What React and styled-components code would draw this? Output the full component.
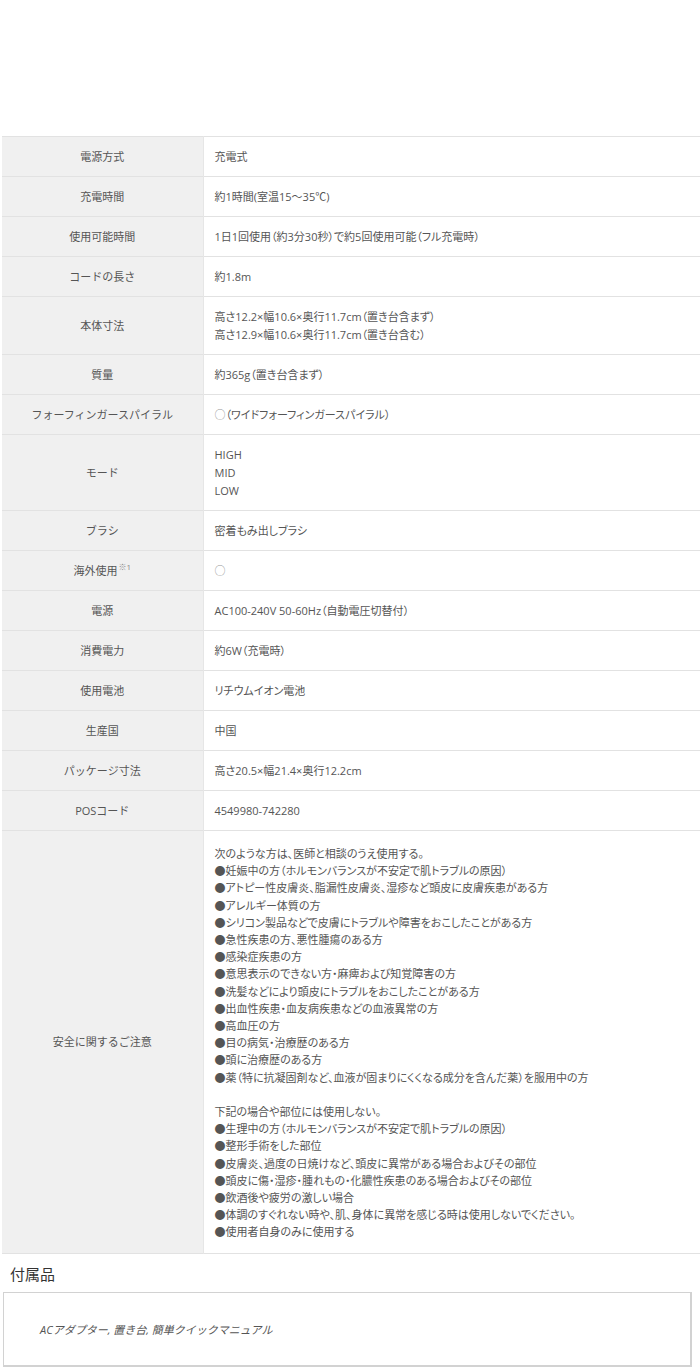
import React from 'react';
import styled, { createGlobalStyle } from 'styled-components';

const Global = createGlobalStyle`
    body {
        margin: 0;
        background: #fff;
        font-family: "Open Sans", "Noto Sans CJK JP", sans-serif;
        color: #555;
    }
`;

const Page = styled.div`
    padding-top: 136px;
    padding-bottom: 5px;
`;

const SpecTable = styled.table`
    margin-left: 2px;
    width: calc(100% - 2px);
    border-collapse: collapse;
    font-size: 11px;
    line-height: 18px;
`;

const Row = styled.tr`
    border-top: 1px solid #e2e2e2;
    border-bottom: 1px solid #e2e2e2;
`;

const Head = styled.th`
    width: 201px;
    box-sizing: border-box;
    background-color: #f0f0f0;
    border-right: 1px solid #e6e6e6;
    font-weight: normal;
    text-align: center;
    vertical-align: middle;
    padding: 11px 8px 10px;
    color: #555;
`;

const Cell = styled.td`
    text-align: left;
    vertical-align: top;
    padding: ${({$tall}) => $tall ? '14px 11px 12px' : '11px 11px 10px'};
    line-height: ${({$tall}) => $tall ? '17.2px' : '18px'};
    color: #555;
    font-feature-settings: "palt";
`;

const Note = styled.sup`
    font-size: 8px;
    color: #888;
    vertical-align: top;
    line-height: 10px;
    margin-left: 1px;
`;

const Mark = styled.span`
    color: #999;
`;

const Line = styled.div`
    min-height: ${({$blank}) => $blank ? '17.2px' : '0'};
`;

const Title = styled.h3`
    margin: 11px 0 0 10px;
    font-size: 15px;
    font-weight: normal;
    line-height: 18px;
    color: #333;
`;

const Box = styled.div`
    margin: 9px 0 0 3px;
    width: 689px;
    box-sizing: border-box;
    height: 75px;
    border: 1px solid #d2d2d2;
    border-right-width: 2px;
    border-bottom-width: 2px;
    display: flex;
    align-items: center;
    padding-left: 36px;
    font-size: 11px;
    font-style: italic;
    color: #555;
`;

const rows = [
    ['電源方式', ['充電式']],
    ['充電時間', ['約1時間(室温15～35℃)']],
    ['使用可能時間', ['1日1回使用（約3分30秒）で約5回使用可能（フル充電時）']],
    ['コードの長さ', ['約1.8m']],
    ['本体寸法', ['高さ12.2×幅10.6×奥行11.7cm（置き台含まず）', '高さ12.9×幅10.6×奥行11.7cm（置き台含む）']],
    ['質量', ['約365g（置き台含まず）']],
    ['フォーフィンガースパイラル', [<><Mark>○</Mark>（ワイドフォーフィンガースパイラル）</>]],
    ['モード', ['HIGH', 'MID', 'LOW']],
    ['ブラシ', ['密着もみ出しブラシ']],
    [<>海外使用<Note>※1</Note></>, [<Mark>○</Mark>]],
    ['電源', ['AC100-240V 50-60Hz（自動電圧切替付）']],
    ['消費電力', ['約6W（充電時）']],
    ['使用電池', ['リチウムイオン電池']],
    ['生産国', ['中国']],
    ['パッケージ寸法', ['高さ20.5×幅21.4×奥行12.2cm']],
    ['POSコード', ['4549980-742280']],
];

const safety = [
    '次のような方は、医師と相談のうえ使用する。',
    '●妊娠中の方（ホルモンバランスが不安定で肌トラブルの原因）',
    '●アトピー性皮膚炎、脂漏性皮膚炎、湿疹など頭皮に皮膚疾患がある方',
    '●アレルギー体質の方',
    '●シリコン製品などで皮膚にトラブルや障害をおこしたことがある方',
    '●急性疾患の方、悪性腫瘍のある方',
    '●感染症疾患の方',
    '●意思表示のできない方・麻痺および知覚障害の方',
    '●洗髪などにより頭皮にトラブルをおこしたことがある方',
    '●出血性疾患・血友病疾患などの血液異常の方',
    '●高血圧の方',
    '●目の病気・治療歴のある方',
    '●頭に治療歴のある方',
    '●薬（特に抗凝固剤など、血液が固まりにくくなる成分を含んだ薬）を服用中の方',
    '',
    '下記の場合や部位には使用しない。',
    '●生理中の方（ホルモンバランスが不安定で肌トラブルの原因）',
    '●整形手術をした部位',
    '●皮膚炎、過度の日焼けなど、頭皮に異常がある場合およびその部位',
    '●頭皮に傷・湿疹・腫れもの・化膿性疾患のある場合およびその部位',
    '●飲酒後や疲労の激しい場合',
    '●体調のすぐれない時や、肌、身体に異常を感じる時は使用しないでください。',
    '●使用者自身のみに使用する',
];

function App(){
    return(
        <>
            <Global/>
            <Page>
                <SpecTable>
                    <tbody>
                        {rows.map((r,i) => (
                            <Row key={i}>
                                <Head>{r[0]}</Head>
                                <Cell>
                                    {r[1].map((t,j) => <Line key={j}>{t}</Line>)}
                                </Cell>
                            </Row>
                        ))}
                        <Row>
                            <Head>安全に関するご注意</Head>
                            <Cell $tall>
                                {safety.map((t,j) => <Line key={j} $blank={t === ''}>{t}</Line>)}
                            </Cell>
                        </Row>
                    </tbody>
                </SpecTable>
                <Title>付属品</Title>
                <Box>ACアダプター, 置き台, 簡単クイックマニュアル</Box>
            </Page>
        </>
    );
}

export default App;
